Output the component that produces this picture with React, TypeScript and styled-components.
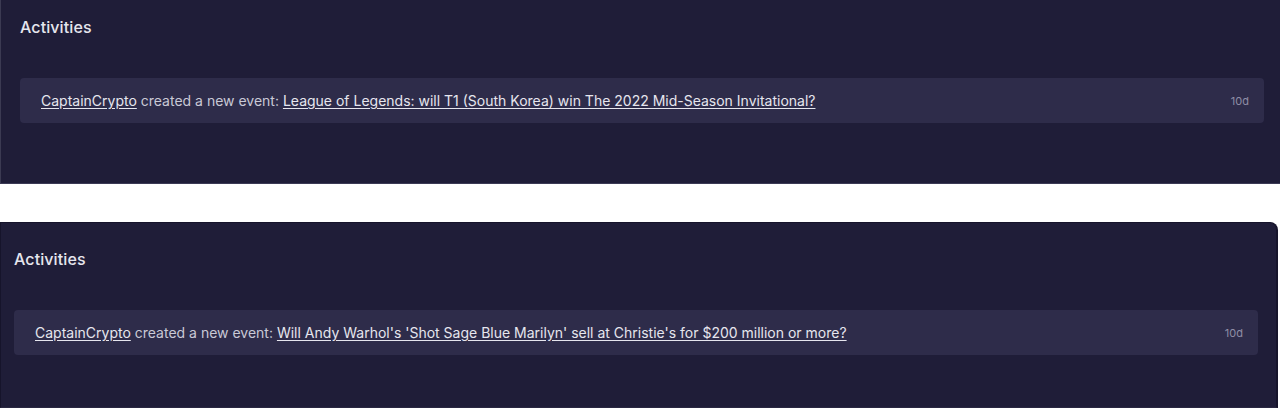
import styled, { createGlobalStyle } from 'styled-components'

const COLORS = {
  panel: '#1f1d38',
  panelEdge: '#16142b',
  card: '#2e2c4a',
  text: '#e6e6ee',
  muted: '#c9c9d6',
  stamp: '#8f8ea6',
}

const GlobalStyle = createGlobalStyle`
  body {
    margin: 0;
    background: #ffffff;
    font-family: Inter, 'Noto Sans', sans-serif;
  }
`

const Page = styled.div`
  display: flex;
  flex-direction: column;
  gap: 38px;
  width: 1280px;
  height: 411px;
  overflow: hidden;
`

interface PanelProps {
  inset: number
  right: number
  top: number
  rounded?: boolean
}

const Panel = styled('section')<PanelProps>`
  box-sizing: border-box;
  height: ${(props) => (props.rounded ? 186 : 184)}px;
  width: ${(props) => (props.rounded ? 1278 : 1280)}px;
  background: ${COLORS.panel};
  padding: ${(props) => props.top}px ${(props) => props.right}px 0
    ${(props) => props.inset}px;
  border-left: 1px solid ${(props) => (props.rounded ? COLORS.panelEdge : '#3b3a52')};
  border-right: ${(props) => (props.rounded ? `2px solid ${COLORS.panelEdge}` : 'none')};
  border-top: ${(props) => (props.rounded ? `1px solid ${COLORS.panelEdge}` : 'none')};
  border-bottom: 1px solid ${(props) => (props.rounded ? '#2a2842' : '#3b3a55')};
  border-top-right-radius: ${(props) => (props.rounded ? 8 : 0)}px;
  display: flex;
  flex-direction: column;
  gap: 41px;
`

const Title = styled.h2`
  margin: 0;
  font-size: 16px;
  line-height: 20px;
  font-weight: 500;
  color: ${COLORS.text};
  letter-spacing: 0.1px;
`

const Card = styled.div`
  display: flex;
  align-items: center;
  justify-content: space-between;
  height: 45px;
  padding: 0 15px 0 21px;
  background: ${COLORS.card};
  border-radius: 4px;
`

const Line = styled.p`
  margin: 0;
  font-size: 14px;
  color: ${COLORS.muted};
`

const Link = styled.a`
  color: ${COLORS.text};
  text-decoration: underline;
  text-underline-offset: 2px;
  cursor: pointer;
`

const Stamp = styled.span`
  font-size: 11px;
  color: ${COLORS.stamp};
`

interface Activity {
  user: string
  event: string
  age: string
}

const ActivityPanel = ({
  item,
  inset,
  right,
  top,
  rounded,
}: {
  item: Activity
  inset: number
  right: number
  top: number
  rounded?: boolean
}) => (
  <Panel inset={inset} right={right} top={top} rounded={rounded}>
    <Title>Activities</Title>
    <Card>
      <Line>
        <Link>{item.user}</Link> created a new event: <Link>{item.event}</Link>
      </Line>
      <Stamp>{item.age}</Stamp>
    </Card>
  </Panel>
)

const App = () => {
  return (
    <>
      <GlobalStyle />
      <Page>
        <ActivityPanel
          inset={19}
          right={16}
          top={17}
          item={{
            user: 'CaptainCrypto',
            event:
              'League of Legends: will T1 (South Korea) win The 2022 Mid-Season Invitational?',
            age: '10d',
          }}
        />
        <ActivityPanel
          inset={13}
          right={18}
          top={26}
          rounded
          item={{
            user: 'CaptainCrypto',
            event:
              "Will Andy Warhol's 'Shot Sage Blue Marilyn' sell at Christie's for $200 million or more?",
            age: '10d',
          }}
        />
      </Page>
    </>
  )
}

export default App
